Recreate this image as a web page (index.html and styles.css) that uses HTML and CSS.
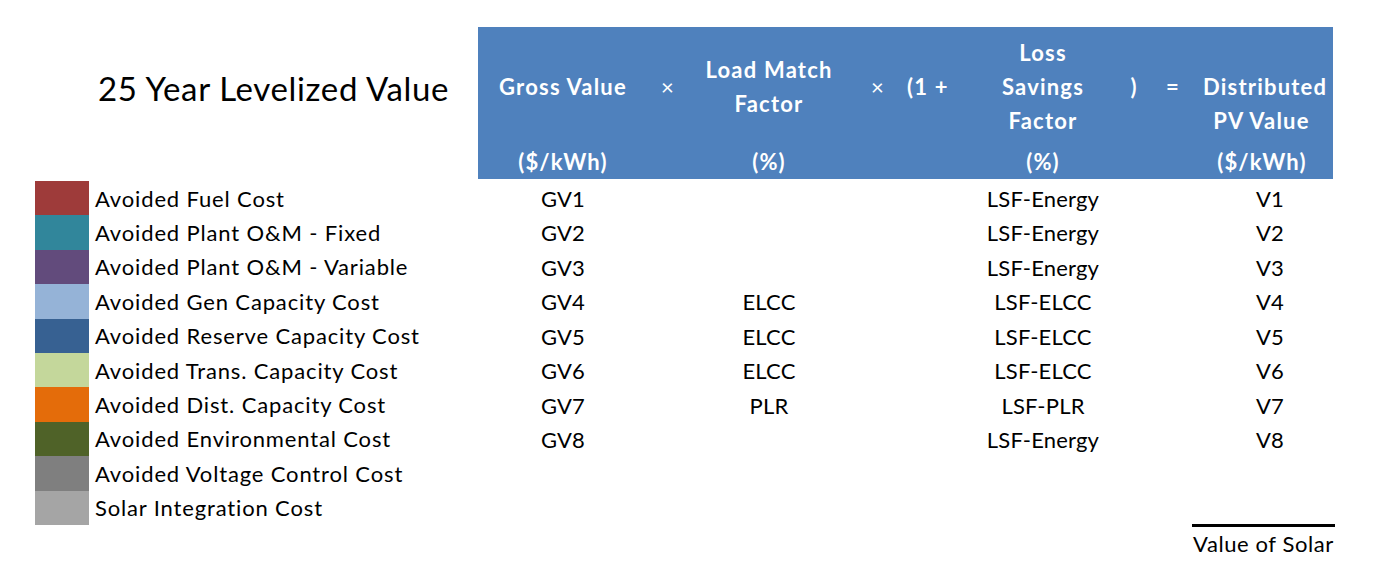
FILE: index.html
```html
<!DOCTYPE html>
<html>
<head>
<meta charset="utf-8">
<link rel="stylesheet" href="styles.css">
</head>
<body>
<div class="page">
  <div class="left">
    <div class="title-wrap"><h1 class="title">25 Year Levelized Value</h1></div>
    <ul class="legend">
      <li class="item"><span class="sw c1"></span><span class="lbl">Avoided Fuel Cost</span></li>
      <li class="item"><span class="sw c2"></span><span class="lbl">Avoided Plant O&amp;M - Fixed</span></li>
      <li class="item"><span class="sw c3"></span><span class="lbl">Avoided Plant O&amp;M - Variable</span></li>
      <li class="item"><span class="sw c4"></span><span class="lbl">Avoided Gen Capacity Cost</span></li>
      <li class="item"><span class="sw c5"></span><span class="lbl">Avoided Reserve Capacity Cost</span></li>
      <li class="item"><span class="sw c6"></span><span class="lbl">Avoided Trans. Capacity Cost</span></li>
      <li class="item"><span class="sw c7"></span><span class="lbl">Avoided Dist. Capacity Cost</span></li>
      <li class="item"><span class="sw c8"></span><span class="lbl">Avoided Environmental Cost</span></li>
      <li class="item"><span class="sw c9"></span><span class="lbl">Avoided Voltage Control Cost</span></li>
      <li class="item"><span class="sw c10"></span><span class="lbl">Solar Integration Cost</span></li>
    </ul>
  </div>
  <div class="right">
    <div class="head">
      <div class="h h1">Gross Value</div>
      <div class="h op">×</div>
      <div class="h h3">Load Match<br>Factor</div>
      <div class="h op">×</div>
      <div class="h h5">(1 +</div>
      <div class="h h6">Loss<br>Savings<br>Factor</div>
      <div class="h">)</div>
      <div class="h">=</div>
      <div class="h h9">Distributed<br>PV Value</div>
      <div class="u">($/kWh)</div><div class="u"></div>
      <div class="u">(%)</div><div class="u"></div><div class="u"></div>
      <div class="u">(%)</div><div class="u"></div><div class="u"></div>
      <div class="u u9">($/kWh)</div>
    </div>
    <div class="rows">
      <div class="row"><span class="d a">GV1</span><span class="d b"></span><span class="d c">LSF-Energy</span><span class="d e">V1</span></div>
      <div class="row"><span class="d a">GV2</span><span class="d b"></span><span class="d c">LSF-Energy</span><span class="d e">V2</span></div>
      <div class="row"><span class="d a">GV3</span><span class="d b"></span><span class="d c">LSF-Energy</span><span class="d e">V3</span></div>
      <div class="row"><span class="d a">GV4</span><span class="d b">ELCC</span><span class="d c">LSF-ELCC</span><span class="d e">V4</span></div>
      <div class="row"><span class="d a">GV5</span><span class="d b">ELCC</span><span class="d c">LSF-ELCC</span><span class="d e">V5</span></div>
      <div class="row"><span class="d a">GV6</span><span class="d b">ELCC</span><span class="d c">LSF-ELCC</span><span class="d e">V6</span></div>
      <div class="row"><span class="d a">GV7</span><span class="d b">PLR</span><span class="d c">LSF-PLR</span><span class="d e">V7</span></div>
      <div class="row"><span class="d a">GV8</span><span class="d b"></span><span class="d c">LSF-Energy</span><span class="d e">V8</span></div>
    </div>
    <div class="total"><span class="total-txt">Value of Solar</span></div>
  </div>
</div>
</body>
</html>
```

FILE: styles.css
```css
html, body {
  margin: 0;
  padding: 0;
  background: #ffffff;
}
body {
  font-family: Lato, "Open Sans", sans-serif;
  color: #000;
}
.page {
  display: flex;
  width: 1377px;
  height: 566px;
}
.left {
  width: 478px;
  flex: none;
}
.title-wrap {
  height: 181px;
  display: flex;
  align-items: center;
  padding-left: 98px;
  box-sizing: border-box;
  padding-bottom: 6px;
}
.title {
  margin: 0;
  font-weight: 400;
  font-size: 33px;
  letter-spacing: 0.65px;
  white-space: nowrap;
}
.legend {
  list-style: none;
  margin: 0;
  padding: 0 0 0 35px;
}
.item {
  display: flex;
  align-items: center;
  height: 34.4px;
}
.sw {
  width: 54px;
  height: 100%;
  flex: none;
}
.lbl {
  margin-left: 6px;
  font-size: 22px;
  letter-spacing: 0.85px;
  white-space: nowrap;
}
.c1 { background: #9e3b3a; }
.c2 { background: #31869b; }
.c3 { background: #624b7c; }
.c4 { background: #95b3d7; }
.c5 { background: #376192; }
.c6 { background: #c4d79b; }
.c7 { background: #e46c0a; }
.c8 { background: #4f6228; }
.c9 { background: #7f7f7f; }
.c10 { background: #a5a5a5; }

.right {
  width: 855px;
  flex: none;
  padding-top: 27px;
}
.head {
  background: #4f81bd;
  color: #fff;
  font-weight: 700;
  font-size: 22px;
  letter-spacing: 1.2px;
  line-height: 34px;
  height: 152px;
  box-sizing: border-box;
  padding-top: 9px;
  display: grid;
  grid-template-columns: 170px 40px 162px 56px 55px 164px 18px 60px 130px;
  grid-template-rows: 102px 34px;
  row-gap: 7px;
  text-align: center;
  white-space: nowrap;
}
.h {
  align-self: center;
}
.op {
  font-weight: 400;
}
.h5 {
  text-align: left;
  padding-left: 1px;
}
.h9 {
  align-self: end;
  padding-right: 13px;
}
.u9 {
  padding-right: 12px;
}
.rows {
  padding-top: 2px;
}
.row {
  display: grid;
  grid-template-columns: 170px 40px 162px 56px 55px 164px 18px 60px 130px;
  height: 34.5px;
  align-items: center;
  font-size: 22px;
  letter-spacing: 0.2px;
  text-align: center;
  white-space: nowrap;
}
.d.a { grid-column: 1; }
.d.b { grid-column: 3; }
.d.c { grid-column: 6; }
.d.e { grid-column: 9; padding-left: 4px; }
.total {
  display: flex;
  justify-content: flex-end;
  margin-top: 67px;
  margin-right: -2px;
}
.total-txt {
  border-top: 3px solid #000;
  width: 143px;
  text-align: center;
  font-size: 22px;
  letter-spacing: 0.6px;
  line-height: 34px;
  white-space: nowrap;
}
```
